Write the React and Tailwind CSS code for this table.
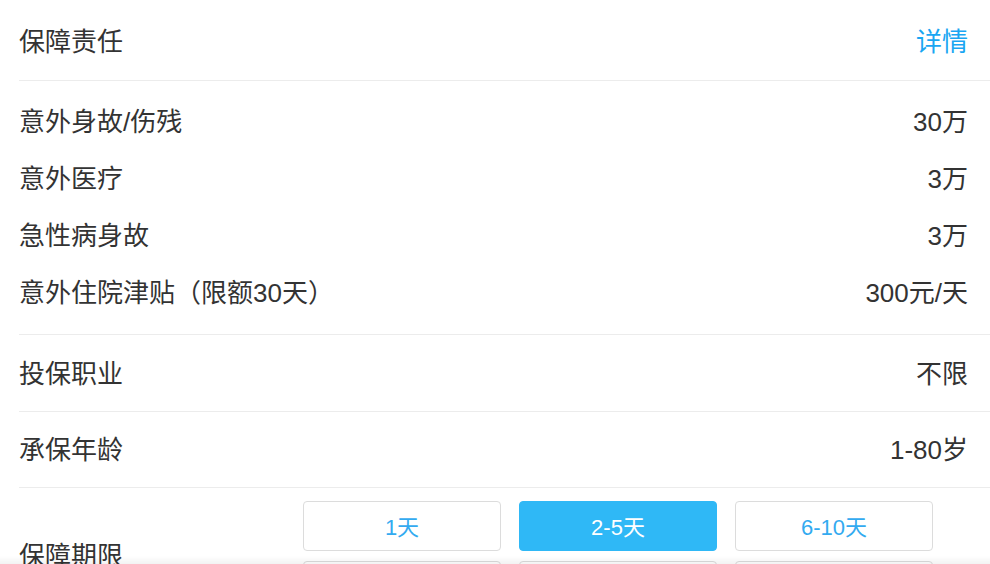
const benefits = [
  { name: '意外身故/伤残', value: '30万' },
  { name: '意外医疗', value: '3万' },
  { name: '急性病身故', value: '3万' },
  { name: '意外住院津贴（限额30天）', value: '300元/天' },
];

const periods = ['1天', '2-5天', '6-10天', '11-15天', '16-20天', '21-30天'];

export default function App() {
  const selected = 1;

  return (
    <div
      className="relative min-h-screen bg-white text-[26px] text-[#333]"
      style={{ fontFamily: '"Liberation Sans", "Noto Sans CJK SC", sans-serif' }}
    >
      <div className="pl-[19px]">
        <div className="flex h-[81px] items-center justify-between border-b border-[#ececec] pt-[4px] pr-[22px]">
          <span>保障责任</span>
          <span className="text-[#1aa6f2]">详情</span>
        </div>

        <div className="border-b border-[#ececec] pt-[13px] pb-[12px] pr-[22px]">
          {benefits.map((b) => (
            <div key={b.name} className="flex h-[57px] items-center justify-between">
              <span>{b.name}</span>
              <span>{b.value}</span>
            </div>
          ))}
        </div>

        <div className="flex h-[77px] items-center justify-between border-b border-[#ececec] pt-[2px] pr-[22px]">
          <span>投保职业</span>
          <span>不限</span>
        </div>

        <div className="flex h-[76px] items-center justify-between border-b border-[#ececec] pt-[2px] pr-[22px]">
          <span>承保年龄</span>
          <span>1-80岁</span>
        </div>

        <div className="flex items-center pt-[13px] pb-[13px]">
          <span className="w-[284px] shrink-0">保障期限</span>
          <div className="grid grid-cols-[198px_198px_198px] gap-x-[18px] gap-y-[10px]">
            {periods.map((p, i) => (
              <button
                key={p}
                className={
                  i === selected
                    ? 'h-[50px] rounded-[4px] border border-[#2fb8f6] bg-[#2fb8f6] pt-[2px] text-[22px] text-white'
                    : 'h-[50px] rounded-[4px] border border-[#dcdcdc] bg-white pt-[2px] text-[22px] text-[#33aaf0]'
                }
              >
                {p}
              </button>
            ))}
          </div>
        </div>
      </div>

      <div className="pointer-events-none fixed inset-x-0 bottom-0 h-[8px] bg-linear-to-b from-transparent to-black/5" />
    </div>
  );
}
